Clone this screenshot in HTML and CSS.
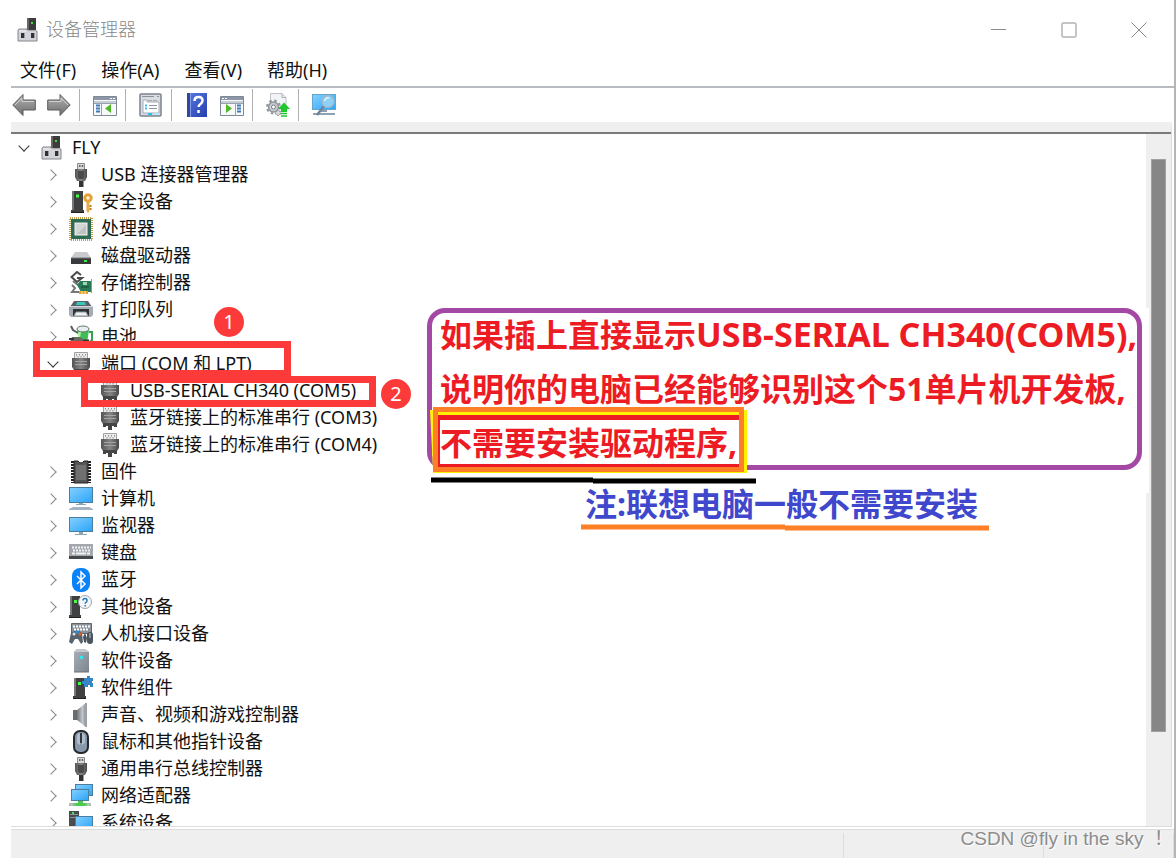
FILE: index.html
```html
<!DOCTYPE html>
<html lang="zh-CN">
<head>
  <meta charset="UTF-8">
  <meta name="viewport" content="width=device-width, initial-scale=1.0">
  <title>设备管理器</title>
  <link rel="stylesheet" href="styles.css">
</head>
<body>
  <!-- Icon sprite -->
  <svg class="sprite" width="0" height="0" aria-hidden="true">
    <defs>
      <linearGradient id="screen" x1="0" y1="0" x2="1" y2="1"><stop offset="0" stop-color="#86d0ff"/><stop offset="1" stop-color="#2aa4f8"/></linearGradient>
      <linearGradient id="metal" x1="0" y1="0" x2="0" y2="1"><stop offset="0" stop-color="#b4b4b4"/><stop offset="1" stop-color="#6c6c6c"/></linearGradient>
      <linearGradient id="steel" x1="0" y1="0" x2="1" y2="1"><stop offset="0" stop-color="#a9b0b8"/><stop offset="1" stop-color="#7c848d"/></linearGradient>
      <linearGradient id="plug" x1="0" y1="0" x2="1" y2="0"><stop offset="0" stop-color="#555"/><stop offset=".5" stop-color="#858585"/><stop offset="1" stop-color="#4a4a4a"/></linearGradient>
      <linearGradient id="book" x1="0" y1="0" x2="1" y2="1"><stop offset="0" stop-color="#5b78e0"/><stop offset="1" stop-color="#243fae"/></linearGradient>
      <linearGradient id="cone" x1="0" y1="0" x2="1" y2="0"><stop offset="0" stop-color="#6f757b"/><stop offset=".6" stop-color="#c3c8cd"/><stop offset="1" stop-color="#858c93"/></linearGradient>
    </defs>
    <symbol id="i-pc" viewBox="0 0 24 24">
      <path d="M11 0h9v13h-9z" fill="#3c3c3c"/><path d="M11 0h2v13h-2z" fill="#666"/><rect x="15" y="4" width="2" height="2" fill="#3be03b"/>
      <path d="M3 11h8v2h10v10H2V12z" fill="#d3d4d9" stroke="#85868c"/><path d="M3 13h17" stroke="#f4f4f6"/>
      <path d="M5 15h3v5H5zM15 15h3v5h-3z" fill="#303236"/><path d="M8 15h1v5H8zM18 15h1v5h-1z" fill="#9b9ca2"/>
    </symbol>
    <symbol id="i-usb" viewBox="0 0 24 24">
      <path d="M8.500.5h7v7h-7z" fill="#d9d9d9" stroke="#8b8b8b"/><path d="M10 2h1.500v2H10zM12.700 2h1.500v2h-1.500z" fill="#666"/>
      <path d="M6 6h12v8l-2 4H8l-2-4z" fill="url(#plug)"/><path d="M9 8h6v6l-1 2h-4l-1-2z" fill="#4b4b4b"/><path d="M10 18h4.500v6H10z" fill="#333"/>
    </symbol>
    <symbol id="i-port" viewBox="0 0 24 24">
      <path d="M5.500.5h13v6h-13z" fill="#ececec" stroke="#a0a0a0"/><path d="M7.500 2v1.500M10.500 2v1.500M13.500 2v1.500M16.500 2v1.500M9 4v1.500M12 4v1.500M15 4v1.500" stroke="#8a8a8a"/>
      <path d="M3 6h18v9l-2 3H5l-2-3z" fill="url(#plug)"/><path d="M6 9.500h12M6 12.500h12" stroke="#a5a5a5"/><path d="M5 17h3v4H5zM16 17h3v4h-3zM8 17h8v3h-2v4h-4v-4H8z" fill="#454545"/>
    </symbol>
    <symbol id="i-security" viewBox="0 0 24 24">
      <path d="M3 1h11v19H3zM2 20h13v3H2z" fill="#3e4042"/><path d="M3 1h2v19H3z" fill="#737577"/><path d="M2 22.500h13" stroke="#202020"/><rect x="7" y="4.500" width="3" height="3" fill="#40ff40"/>
      <circle cx="19" cy="8" r="3.200" fill="#fff3d6" stroke="#e0a436" stroke-width="3"/><path d="M17.500 11h3v10L19 23l-1.500-2z" fill="#e5ad44"/><path d="M20.500 15h2v2h-2zM20.500 18h2v2h-2z" fill="#bc7e21"/>
    </symbol>
    <symbol id="i-cpu" viewBox="0 0 24 24">
      <rect x="1" y="1" width="22" height="22" fill="none" stroke="#c39d4a" stroke-width="2" stroke-dasharray="1 1"/><rect x="2" y="2" width="20" height="20" fill="#2f6b52"/><rect x="6" y="6" width="12" height="12" fill="#d4d6d6" stroke="#eef1ef"/><path d="M17 8v9H8z" fill="#bfc2c2"/>
    </symbol>
    <symbol id="i-disk" viewBox="0 0 24 24">
      <path d="M6 8h12l4 6H2z" fill="#c8cacd"/><path d="M2 14h20v6H2z" fill="#37393b"/><path d="M2 14h20" stroke="#777"/><rect x="15" y="16" width="3" height="2" fill="#3bea46"/>
    </symbol>
    <symbol id="i-storage" viewBox="0 0 24 24">
      <path d="M12 4L8 1 2.500 6 8 11l5-4H8" fill="none" stroke="#4a4a4a" stroke-width="2"/><path d="M4 10l5 4M3 14l3 3-3 4h7" fill="none" stroke="#777" stroke-width="2"/>
      <path d="M8 14l3-4h11v11H12z" fill="#297b55"/><path d="M22.500 8v14" stroke="#8e9993"/><path d="M14 11h4v3h-4z" fill="#9fd5b5"/><path d="M12 16h8" stroke="#174d36"/><path d="M10 20h9v3h-9z" fill="#e4a01f"/><path d="M13 20v3M16 20v3" stroke="#fff0c5"/>
    </symbol>
    <symbol id="i-printer" viewBox="0 0 24 24">
      <path d="M5 3h14l4 6H1z" fill="#5a6068"/><path d="M8 4h8l1 3H7z" fill="#35c8b8"/><path d="M0 8h24v9l-2 2H2l-2-2z" fill="#a6acb4"/><path d="M0 8.500h24" stroke="#d4d8dd"/><path d="M4 11h16v7H4z" fill="#2f3338"/><path d="M7 14h10l2 4H5z" fill="#f0f1f2" stroke="#8e949b"/>
    </symbol>
    <symbol id="i-battery" viewBox="0 0 24 24">
      <path d="M8 4l10-1 2 2-2 13h-8z" fill="#40bd55"/><ellipse cx="14" cy="4" rx="6" ry="3" fill="#e7eeee" stroke="#64716b"/><path d="M20 7h3v8l-3 3" fill="none" stroke="#3a9f4c" stroke-width="2"/><path d="M9 7h3l-1 6H9z" fill="#adf4a5"/>
      <path d="M2 1l2 4 5 3" fill="none" stroke="#55605a" stroke-width="2"/><path d="M3 12h8l3 2v5l-3 2H3l-2-4z" fill="#6c6962"/><path d="M0 14h5M0 18h5" stroke="#333" stroke-width="2"/><path d="M14 16h6" stroke="#333" stroke-width="3"/>
    </symbol>
    <symbol id="i-firmware" viewBox="0 0 24 24">
      <path d="M5 1h4q3 4 6 0h4v22H5z" fill="#555" stroke="#202020"/><path d="M7 5h10v15H7z" fill="#707070"/><path d="M3.500 1v22M20.500 1v22" stroke="#222" stroke-width="3" stroke-dasharray="2 1"/>
    </symbol>
    <symbol id="i-computer" viewBox="0 0 24 24">
      <rect x=".5" y=".5" width="23" height="15" fill="url(#screen)" stroke="#4d7d9e"/><path d="M10 16h4v1h3v1H7v-1h3z" fill="#8ba5b5"/><path d="M4 20h16l4 2v1H0v-1z" fill="#a4b4c3"/>
    </symbol>
    <symbol id="i-monitor" viewBox="0 0 24 24">
      <rect x=".5" y="3.500" width="23" height="14" fill="url(#screen)" stroke="#4d7d9e"/><path d="M10 18h4v2h4v1H6v-1h4z" fill="#8ba5b5"/>
    </symbol>
    <symbol id="i-keyboard" viewBox="0 0 24 24">
      <path d="M0 3h24v15H0z" fill="#a3a8af"/><path d="M0 15h24v3H0z" fill="#45484c"/><path d="M3 6.500h19M4 9.500h17" stroke="#f3f3f3" stroke-width="2" stroke-dasharray="2 1"/><path d="M3 12.500h3M7 12.500h10M18 12.500h3" stroke="#f3f3f3" stroke-width="2"/>
    </symbol>
    <symbol id="i-bluetooth" viewBox="0 0 24 24">
      <rect x="3" y="0" width="18" height="24" rx="8" fill="#0a82fa"/><path d="M8 8l8 8-4 4V4l4 4-8 8" fill="none" stroke="#fff" stroke-width="1.500"/>
    </symbol>
    <symbol id="i-other" viewBox="0 0 24 24">
      <path d="M1 1h10v19H1zM0 20h12v3H0z" fill="#3e4042"/><path d="M1 1h2v19H1z" fill="#77797b"/><path d="M0 22.500h12" stroke="#202020"/><rect x="5" y="5" width="3" height="3" fill="#40ff40"/>
      <circle cx="16" cy="7" r="6.500" fill="#f4f6f8" stroke="#9fa6ad"/><path d="M14 5.500q0-2 2-2t2 2q0 1.200-1 1.800-.8.400-.8 1.500M16.200 10v1.500" fill="none" stroke="#237abb" stroke-width="1.500"/>
    </symbol>
    <symbol id="i-hid" viewBox="0 0 24 24">
      <path d="M2.500 1.500h20v10h-20z" fill="#8c9299" stroke="#5f666d"/><path d="M4 4.500h17M5 7.500h15" stroke="#fff" stroke-width="2" stroke-dasharray="2 1"/>
      <path d="M2 11l3-2h5l3 2 1 9-2 2-3-5H6l-3 5-3-2z" fill="#59636e"/><circle cx="5" cy="12" r="1.500" fill="#e0e4e8"/><circle cx="8" cy="10" r="1.800" fill="#2095e8"/><circle cx="11" cy="12" r="1.500" fill="#f06025"/>
      <path d="M14 15l2-4 2 5-1 5-2-1z" fill="#48515a"/><rect x="18" y="10" width="6" height="12" rx="3" fill="#4b535c"/><path d="M21 11v5" stroke="#c5cbd1"/>
    </symbol>
    <symbol id="i-software" viewBox="0 0 24 24">
      <path d="M5 3l3-3h8l4 3v20H5z" fill="url(#steel)"/><path d="M5 3l3-3h8l4 3z" fill="#c2c8cd"/><rect x="11" y="7" width="3" height="3" fill="#36e4f4"/><path d="M5 23h15" stroke="#69727b"/>
    </symbol>
    <symbol id="i-component" viewBox="0 0 24 24">
      <path d="M5 2h11v18H5zM4 20h13v3H4z" fill="#3e4042"/><path d="M5 2h2v18H5z" fill="#77797b"/><path d="M4 22.500h13" stroke="#202020"/><rect x="9" y="6" width="3" height="3" fill="#40ff40"/>
      <path d="M15 2h3V0h3v2h3v3h-1v2h1v4h-3V9h-2v2h-4V8h-2V5h2z" fill="#3786c6"/>
    </symbol>
    <symbol id="i-sound" viewBox="0 0 24 24">
      <path d="M4 7h5v10H4z" fill="#676c71"/><path d="M8 7l9-7v24l-9-7z" fill="url(#cone)"/><path d="M17 0v24" stroke="#9aa1a8" stroke-width="2"/>
    </symbol>
    <symbol id="i-mouse" viewBox="0 0 24 24">
      <rect x="5" y="1" width="14" height="22" rx="6" fill="#8798ab" stroke="#25282c" stroke-width="2"/><path d="M8 5q1-2 3-2v12l-3-2zM13 3q3 1 3 3v7l-3 2z" fill="#b1bdca"/><path d="M12 3v10" stroke="#34383d" stroke-width="2"/>
    </symbol>
    <symbol id="i-network" viewBox="0 0 24 24">
      <rect x="6.500" y=".5" width="17" height="11" fill="url(#screen)" stroke="#4d7d9e"/><rect x="2.500" y="5.500" width="17" height="11" fill="url(#screen)" stroke="#4d7d9e"/>
      <path d="M9 17h5v2h2v3H7v-3h2z" fill="#4cc950"/><path d="M0 20.500h7M16 20.500h6" stroke="#b7bcb9" stroke-width="3"/><path d="M4 20.500h3M16 20.500h2" stroke="#69cf6a" stroke-width="3"/>
    </symbol>
    <symbol id="i-system" viewBox="0 0 24 24">
      <path d="M0 0h10v18H0z" fill="#494c4f"/><path d="M1 3.500h8M1 6.500h8" stroke="#8e9295"/><rect x="3" y="1" width="2" height="2" fill="#3de84b"/><rect x="6.500" y="5.500" width="17" height="12" fill="url(#screen)" stroke="#4d7d9e"/><path d="M12 18h6v3h-6z" fill="#8ba5b5"/>
    </symbol>
    <symbol id="i-back" viewBox="0 0 24 24">
      <path d="M.8 12L11 1.500V7h12.300v10H11v5.500z" fill="url(#metal)" stroke="#5d5d5d"/><path d="M3 12l7-7v3.500h12" fill="none" stroke="#d0d0d0"/>
    </symbol>
    <symbol id="i-tree" viewBox="0 0 24 24">
      <path d="M.5 3.500h23v19H.5z" fill="#f8f9fa" stroke="#7f8995"/><path d="M1 4h22v3H1z" fill="#8c98a8"/><path d="M17 5.500h2M20 5.500h2" stroke="#fff"/><path d="M1 8h22v2H1z" fill="#c8cdd4"/>
      <path d="M8.500 10v12M1 10.500h22" stroke="#99a3ae"/><path d="M3 12.500h4M3 15.500h4M3 18.500h4" stroke="#3c7bb8" stroke-width="2"/><path d="M18 11v9l-6-4.500z" fill="#50b827"/>
    </symbol>
    <symbol id="i-props" viewBox="0 0 24 24">
      <rect x="1" y="1" width="21" height="22" rx="1" fill="#d9dde2" stroke="#7b838d" stroke-width="1.500"/><path d="M3 3.500h12M18 3.500h2" stroke="#8a929b"/><path d="M4 7h4v2h12v11H4z" fill="#fff" stroke="#a3abb4"/><path d="M9 7.500h4M14 7.500h4" stroke="#a3abb4"/>
      <path d="M6 12.500h2M6 15.500h2" stroke="#39bff0" stroke-width="2"/><path d="M10 12.500h8M10 15.500h8" stroke="#8e969f"/><path d="M9 21h4" stroke="#25c4f0" stroke-width="2"/><path d="M15 21h5" stroke="#b5e6f7" stroke-width="2"/>
    </symbol>
    <symbol id="i-help" viewBox="0 0 24 24">
      <path d="M2 0h20v24H2z" fill="url(#book)"/><path d="M2 0h3v24H2z" fill="#30499f"/><path d="M5.500 0v24" stroke="#879ae5"/><path d="M9.500 8q0-4 4-4t4 3.500q0 2-2 3.500t-2 3M13.500 17v3" fill="none" stroke="#fff" stroke-width="2.500"/>
    </symbol>
    <symbol id="i-update" viewBox="0 0 24 24">
      <path d="M4.500.5H16l4 4v14H4.500z" fill="#f2f3f4" stroke="#bfc3c7"/><path d="M16 .5v4h4" fill="none" stroke="#a8adb2"/>
      <circle cx="7.500" cy="14" r="5" fill="#c9ccd0" stroke="#8f959b" stroke-width="1.500"/><circle cx="7.500" cy="14" r="6.500" fill="none" stroke="#8f959b" stroke-width="2" stroke-dasharray="2.500 2.600"/><circle cx="7.500" cy="14" r="2" fill="#fff" stroke="#777d84"/><circle cx="12" cy="20" r="2.500" fill="#d6d8da" stroke="#777d84" stroke-dasharray="2 1"/>
      <path d="M18 9.500l6 6.500h-3v3h-6v-3h-3z" fill="#1fc92d"/><path d="M15 20.500h6M15 23h6" stroke="#1fc92d" stroke-width="1.500"/>
    </symbol>
    <symbol id="i-scan" viewBox="0 0 24 24">
      <rect x=".5" y="1.500" width="23" height="15" fill="url(#screen)" stroke="#62a5ce"/><path d="M9 17h6v2H9zM1 20h22v2H1z" fill="#8da3b3"/>
      <path d="M12 13l-7 9" stroke="#6d8498" stroke-width="2.500"/><circle cx="16" cy="8.500" r="6" fill="#8ed0f6" stroke="#9db8c9" stroke-width="1.500"/><path d="M12.500 8q1-4 5-3" fill="none" stroke="#d8f2ff" stroke-width="1.500"/>
    </symbol>
  </svg>

  <div class="window">
    <header class="titlebar">
      <svg class="icon"><use href="#i-pc"/></svg>
      <h1>设备管理器</h1>
      <button class="caption" aria-label="最小化"><svg viewBox="0 0 16 16"><path d="M0 7.500h15"/></svg></button>
      <button class="caption" aria-label="最大化"><svg viewBox="0 0 16 16"><rect x="1" y="1" width="14" height="14" rx="1"/></svg></button>
      <button class="caption" aria-label="关闭"><svg viewBox="0 0 16 16"><path d="M.5.5l15 15M15.500.5l-15 15"/></svg></button>
    </header>

    <nav class="menubar">
      <button>文件(F)</button>
      <button>操作(A)</button>
      <button>查看(V)</button>
      <button>帮助(H)</button>
    </nav>

    <div class="toolbar">
      <div class="group">
        <button aria-label="后退"><svg class="icon"><use href="#i-back"/></svg></button>
        <button aria-label="前进"><svg class="icon flip"><use href="#i-back"/></svg></button>
      </div>
      <div class="group">
        <button aria-label="显示控制台树"><svg class="icon"><use href="#i-tree"/></svg></button>
      </div>
      <div class="group">
        <button aria-label="属性"><svg class="icon"><use href="#i-props"/></svg></button>
      </div>
      <div class="group">
        <button aria-label="帮助"><svg class="icon"><use href="#i-help"/></svg></button>
        <button aria-label="显示操作窗格"><svg class="icon flip"><use href="#i-tree"/></svg></button>
      </div>
      <div class="group">
        <button aria-label="更新驱动程序"><svg class="icon"><use href="#i-update"/></svg></button>
      </div>
      <div class="group">
        <button aria-label="扫描检测硬件改动"><svg class="icon"><use href="#i-scan"/></svg></button>
      </div>
    </div>

    <main class="content">
      <ul class="tree">
        <li>
          <div class="row"><button class="toggle open" aria-label="折叠"></button><svg class="icon"><use href="#i-pc"/></svg><span>FLY</span></div>
          <ul>
            <li class="row"><button class="toggle" aria-label="展开"></button><svg class="icon"><use href="#i-usb"/></svg><span>USB 连接器管理器</span></li>
            <li class="row"><button class="toggle" aria-label="展开"></button><svg class="icon"><use href="#i-security"/></svg><span>安全设备</span></li>
            <li class="row"><button class="toggle" aria-label="展开"></button><svg class="icon"><use href="#i-cpu"/></svg><span>处理器</span></li>
            <li class="row"><button class="toggle" aria-label="展开"></button><svg class="icon"><use href="#i-disk"/></svg><span>磁盘驱动器</span></li>
            <li class="row"><button class="toggle" aria-label="展开"></button><svg class="icon"><use href="#i-storage"/></svg><span>存储控制器</span></li>
            <li class="row"><button class="toggle" aria-label="展开"></button><svg class="icon"><use href="#i-printer"/></svg><span>打印队列</span></li>
            <li class="row"><button class="toggle" aria-label="展开"></button><svg class="icon"><use href="#i-battery"/></svg><span>电池</span></li>
            <li>
              <div class="row"><button class="toggle open" aria-label="折叠"></button><svg class="icon"><use href="#i-port"/></svg><span>端口 (COM 和 LPT)</span></div>
              <ul>
                <li class="row leaf"><svg class="icon"><use href="#i-port"/></svg><span>USB-SERIAL CH340 (COM5)</span></li>
                <li class="row leaf"><svg class="icon"><use href="#i-port"/></svg><span>蓝牙链接上的标准串行 (COM3)</span></li>
                <li class="row leaf"><svg class="icon"><use href="#i-port"/></svg><span>蓝牙链接上的标准串行 (COM4)</span></li>
              </ul>
            </li>
            <li class="row"><button class="toggle" aria-label="展开"></button><svg class="icon"><use href="#i-firmware"/></svg><span>固件</span></li>
            <li class="row"><button class="toggle" aria-label="展开"></button><svg class="icon"><use href="#i-computer"/></svg><span>计算机</span></li>
            <li class="row"><button class="toggle" aria-label="展开"></button><svg class="icon"><use href="#i-monitor"/></svg><span>监视器</span></li>
            <li class="row"><button class="toggle" aria-label="展开"></button><svg class="icon"><use href="#i-keyboard"/></svg><span>键盘</span></li>
            <li class="row"><button class="toggle" aria-label="展开"></button><svg class="icon"><use href="#i-bluetooth"/></svg><span>蓝牙</span></li>
            <li class="row"><button class="toggle" aria-label="展开"></button><svg class="icon"><use href="#i-other"/></svg><span>其他设备</span></li>
            <li class="row"><button class="toggle" aria-label="展开"></button><svg class="icon"><use href="#i-hid"/></svg><span>人机接口设备</span></li>
            <li class="row"><button class="toggle" aria-label="展开"></button><svg class="icon"><use href="#i-software"/></svg><span>软件设备</span></li>
            <li class="row"><button class="toggle" aria-label="展开"></button><svg class="icon"><use href="#i-component"/></svg><span>软件组件</span></li>
            <li class="row"><button class="toggle" aria-label="展开"></button><svg class="icon"><use href="#i-sound"/></svg><span>声音、视频和游戏控制器</span></li>
            <li class="row"><button class="toggle" aria-label="展开"></button><svg class="icon"><use href="#i-mouse"/></svg><span>鼠标和其他指针设备</span></li>
            <li class="row"><button class="toggle" aria-label="展开"></button><svg class="icon"><use href="#i-usb"/></svg><span>通用串行总线控制器</span></li>
            <li class="row"><button class="toggle" aria-label="展开"></button><svg class="icon"><use href="#i-network"/></svg><span>网络适配器</span></li>
            <li class="row"><button class="toggle" aria-label="展开"></button><svg class="icon"><use href="#i-system"/></svg><span>系统设备</span></li>
          </ul>
        </li>
      </ul>
      <div class="scrollbar"><div class="thumb"></div></div>
    </main>

    <footer class="statusbar"><div></div><div></div><div></div></footer>
  </div>

  <!-- Annotations over the window -->
  <div class="mark mark-port"></div>
  <div class="mark mark-device"></div>
  <span class="badge badge-1">1</span>
  <span class="badge badge-2">2</span>

  <div class="patch"></div>
  <div class="note">
    <p>如果插上直接显示<span class="device-name">USB-SERIAL CH340(COM5),</span></p>
    <p>说明你的电脑已经能够识别这个51单片机开发板,</p>
    <p>不需要安装驱动程序,</p>
  </div>
  <svg class="strokes" width="560" height="126" viewBox="0 0 560 126" fill="none" aria-hidden="true">
    <path d="M0 3h3v63h314V3h-3v60H3" fill="#fff200"/>
    <path d="M7 8h302v5H7zM7 57h302v3H7zM7 8h3v52H7z" fill="#ed1c24"/>
    <path d="M7 5h302v3H7z" fill="#fff200"/>
    <rect x="5.500" y="2.500" width="306" height="60" stroke="#ff7f27" stroke-width="5"/>
    <path d="M1 73h162M163 74h163" stroke="#000" stroke-width="5"/>
    <path d="M151 120h204M355 121h204" stroke="#ff7f27" stroke-width="5"/>
  </svg>
  <p class="remark">注:联想电脑一般不需要安装</p>

  <p class="watermark">CSDN @fly in the sky &nbsp;！</p>
</body>
</html>
```
FILE: styles.css
```css
* {
  box-sizing: border-box;
}
body {
  margin: 0;
  background: #fff;
  color: #111;
  font-family: "Noto Sans", "Noto Sans CJK SC", sans-serif;
  font-size: 18px;
  line-height: 27px;
}
h1, p, ul {
  margin: 0;
  padding: 0;
}
ul {
  list-style: none;
}
button {
  margin: 0;
  padding: 0;
  border: none;
  background: none;
  color: inherit;
  font: inherit;
}
.sprite {
  position: absolute;
}
.icon {
  display: block;
  flex: none;
  width: 24px;
  height: 24px;
}
.flip {
  transform: scaleX(-1);
}

/* Window frame */
.window {
  display: flex;
  flex-direction: column;
  height: 100vh;
  padding: 7px 0 0 11px;
  border-right: 2px solid #b5b5b5;
}
.titlebar {
  display: flex;
  flex: none;
  align-items: center;
  height: 45px;
  padding-left: 5px;
}
.titlebar h1 {
  flex: 1;
  margin-left: 6px;
  color: #888;
  font-size: 18px;
  font-weight: 300;
}
.caption {
  width: 70px;
  height: 45px;
}
.caption svg {
  display: block;
  width: 16px;
  height: 16px;
  margin: 0 auto;
  fill: none;
  stroke: #8c8c8c;
}
.menubar {
  display: flex;
  flex: none;
  gap: 25px;
  height: 36px;
  padding: 5px 9px 2px;
  border-bottom: 2px solid #b8bbc2;
}
.toolbar {
  display: flex;
  flex: none;
  align-items: center;
  height: 34px;
  padding-left: 1px;
}
.group {
  display: flex;
  align-items: center;
  gap: 11px;
  height: 32px;
  margin-right: 13px;
  padding-right: 8px;
  border-right: 1px solid #b0b0b0;
}
.group:last-child {
  border: none;
}

/* Device tree */
.content {
  display: flex;
  flex: 1;
  min-height: 0;
  margin-right: 2px;
  border-top: 10px solid #efefef;
  border-right: 1px solid #dcdcdc;
  border-bottom: 1px solid #dcdcdc;
}
.tree {
  flex: 1;
  overflow: hidden;
  border-top: 2px solid #7a7a7a;
}
.tree ul {
  padding-left: 29px;
}
.row {
  display: flex;
  align-items: center;
  height: 27px;
  padding-left: 3px;
  white-space: nowrap;
}
.row span {
  margin-left: 8px;
}
.leaf {
  padding-left: 29px;
}
.toggle {
  width: 20px;
  height: 20px;
  margin-right: 6px;
}
.toggle::before {
  content: "";
  display: block;
  width: 7px;
  height: 7px;
  margin-left: 4px;
  border: solid #888;
  border-width: 1px 1px 0 0;
  transform: rotate(45deg);
}
.toggle.open::before {
  margin: 0 0 4px 6px;
  border-color: #333;
  transform: rotate(135deg);
}
.scrollbar {
  width: 25px;
  padding: 25px 5px 94px;
  border-top: 2px solid #7a7a7a;
  background: #efefef;
}
.thumb {
  height: 100%;
  border: 1px solid #a0a0a0;
  background: #868686;
}
.statusbar {
  display: flex;
  flex: none;
  height: 29px;
  margin-top: 2px;
  padding-top: 3px;
  border-top: 1px solid #dcdcdc;
  background: #efefef;
}
.statusbar div {
  width: 200px;
  border-right: 1px solid #dcdcdc;
}
.statusbar div:first-child {
  flex: 1;
}
.statusbar div:last-child {
  width: 130px;
}

/* Annotations */
.mark {
  position: absolute;
  border: 7px solid #fc3a3a;
}
.mark-port {
  top: 341px;
  left: 33px;
  width: 258px;
  height: 36px;
}
.mark-device {
  top: 376px;
  left: 81px;
  width: 295px;
  height: 31px;
}
.badge {
  position: absolute;
  width: 30px;
  height: 30px;
  border-radius: 50%;
  background: #fc3a3a;
  color: #fff;
  font-size: 20px;
  line-height: 30px;
  text-align: center;
}
.badge-1 {
  top: 307px;
  left: 214px;
}
.badge-2 {
  top: 379px;
  left: 381px;
}
.patch {
  position: absolute;
  top: 308px;
  left: 1130px;
  width: 19px;
  height: 185px;
  background: #fff;
}
.note {
  position: absolute;
  top: 308px;
  left: 427px;
  width: 715px;
  height: 162px;
  padding-left: 8px;
  border: 5px solid #a349a4;
  border-radius: 18px;
  color: #ed1c24;
  font-size: 32px;
  font-weight: bold;
  line-height: 54px;
  white-space: nowrap;
}
.note p:first-child {
  margin-top: -6px;
}
.device-name {
  font-size: 34px;
}
.strokes {
  position: absolute;
  top: 407px;
  left: 430px;
}
.remark {
  position: absolute;
  top: 477px;
  left: 585px;
  color: #3f48cc;
  font-size: 32px;
  font-weight: bold;
  line-height: 54px;
}
.watermark {
  position: absolute;
  right: 3px;
  bottom: 6px;
  color: #8c8c8c;
  font-family: "Liberation Sans", "Noto Sans CJK SC", sans-serif;
  font-size: 19px;
  text-shadow: 1px 1px 1px #fff;
}
```
